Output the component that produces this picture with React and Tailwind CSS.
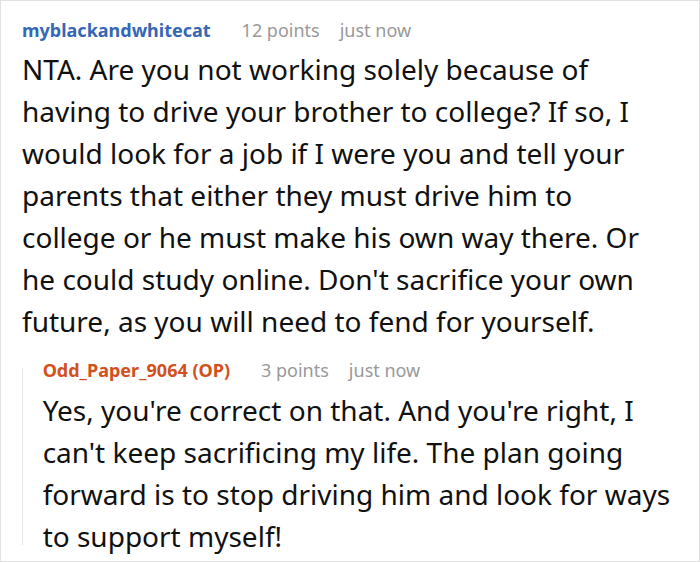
const COMMENT = {
  user: 'myblackandwhitecat',
  points: '12 points',
  time: 'just now',
  body: "NTA. Are you not working solely because of having to drive your brother to college? If so, I would look for a job if I were you and tell your parents that either they must drive him to college or he must make his own way there. Or he could study online. Don't sacrifice your own future, as you will need to fend for yourself.",
}

const REPLY = {
  user: 'Odd_Paper_9064 (OP)',
  points: '3 points',
  time: 'just now',
  body: "Yes, you're correct on that. And you're right, I can't keep sacrificing my life. The plan going forward is to stop driving him and look for ways to support myself!",
}

function Meta({ c, color }) {
  return (
    <div className="flex items-baseline text-[18px] leading-[24px]">
      <span className={`font-bold ${color}`}>{c.user}</span>
      <span className="ml-[31px] text-[#999]">{c.points}</span>
      <span className="ml-[20px] text-[#999]">{c.time}</span>
    </div>
  )
}

export default function App() {
  return (
    <div
      className="w-[700px] h-[562px] bg-white border border-[#e2e2e2] pl-[21px] pr-[20px] pt-[17px] text-[#111] overflow-hidden"
      style={{ fontFamily: '"Noto Sans", sans-serif' }}
    >
      <Meta c={COMMENT} color="text-[#3467b6]" />
      <p className="mt-[6px] pr-[16px] text-[28px] leading-[42px]">{COMMENT.body}</p>

      <div className="mt-[16px] flex">
        <div className="w-[2px] bg-[#e4e4e4] mt-[10px] mb-[12px]" />
        <div className="pl-[20px]">
          <Meta c={REPLY} color="text-[#d2501c]" />
          <p className="mt-[7px] text-[28px] leading-[42px]">{REPLY.body}</p>
        </div>
      </div>
    </div>
  )
}
